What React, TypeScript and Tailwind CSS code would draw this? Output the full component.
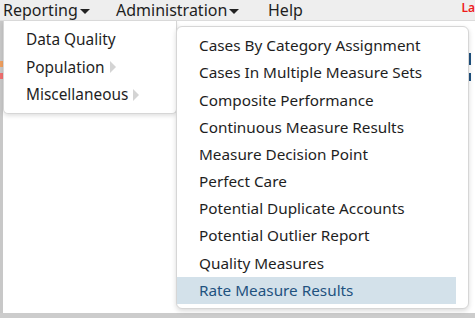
const reportItems = [
  { label: "Data Quality", sub: false },
  { label: "Population", sub: true },
  { label: "Miscellaneous", sub: true },
];

const miscItems = [
  "Cases By Category Assignment",
  "Cases In Multiple Measure Sets",
  "Composite Performance",
  "Continuous Measure Results",
  "Measure Decision Point",
  "Perfect Care",
  "Potential Duplicate Accounts",
  "Potential Outlier Report",
  "Quality Measures",
  "Rate Measure Results",
];

const Caret = () => (
  <span className="ml-[2px] inline-block w-0 h-0 border-l-[5px] border-r-[5px] border-t-[5px] border-l-transparent border-r-transparent border-t-[#222] translate-y-[1px]" />
);

const SubArrow = () => (
  <span className="inline-block w-0 h-0 border-t-[6px] border-b-[6px] border-l-[6px] border-t-transparent border-b-transparent border-l-[#d4d4d4]" />
);

export default function App() {
  const selected = "Rate Measure Results";

  return (
    <div
      className="relative w-[475px] h-[318px] overflow-hidden bg-white text-[#1e1e1e]"
      style={{ fontFamily: '"Noto Sans", "Open Sans", sans-serif' }}
    >
      <div className="flex items-center h-[21px] bg-[#eeeeee] border-b border-[#dcdcdc] text-[16px] leading-none">
        <div className="flex items-center pl-[3px] w-[116px]">
          Reporting
          <Caret />
        </div>
        <div className="flex items-center w-[152px]">
          Administration
          <Caret />
        </div>
        <div>Help</div>
        <div className="ml-auto text-[12px] font-semibold text-[#ee1c1c] self-start mt-[2px]">
          La
        </div>
      </div>

      <div className="flex h-[292px]">
        <div className="w-[3px] bg-[#c8c8c8] relative">
          <span className="absolute left-0 top-[40px] w-[3px] h-[6px] bg-[#f0a060]" />
          <span className="absolute left-0 top-[52px] w-[3px] h-[6px] bg-[#f07070]" />
        </div>
        <div className="flex-1 relative">
          <div className="absolute right-0 top-[32px] w-[6px] flex flex-col gap-[8px]">
            <span className="w-[5px] h-[12px] border-l-2 border-[#1f527f]" />
            <span className="w-[5px] h-[8px] border-l-2 border-[#1f527f]" />
          </div>
        </div>
      </div>
      <div className="h-[5px] bg-[#cccccc]" />

      <div className="absolute left-[3px] top-[21px] w-[174px] bg-white rounded-b-[5px] border border-t-0 border-[#d6d6d6] shadow-[0_2px_4px_rgba(0,0,0,0.12)] pt-[5px] pb-[4px] text-[15.4px]">
        {reportItems.map((item) => (
          <div key={item.label} className="flex items-center h-[27.5px] pl-[22px]">
            <span>{item.label}</span>
            {item.sub && <span className="ml-[5px] mt-[1px]"><SubArrow /></span>}
          </div>
        ))}
      </div>

      <div className="absolute left-[176px] top-[26px] w-[293px] bg-white rounded-[6px] border border-[#d6d6d6] shadow-[0_2px_5px_rgba(0,0,0,0.15)] pt-[5px] pb-[4px] pr-[12px] text-[15.3px]">
        {miscItems.map((label) => (
          <div
            key={label}
            className={
              label === selected
                ? "flex items-center h-[27.2px] pl-[22px] bg-[#d3e1ea] text-[#1f527f]"
                : "flex items-center h-[27.2px] pl-[22px]"
            }
          >
            {label}
          </div>
        ))}
      </div>
    </div>
  );
}
